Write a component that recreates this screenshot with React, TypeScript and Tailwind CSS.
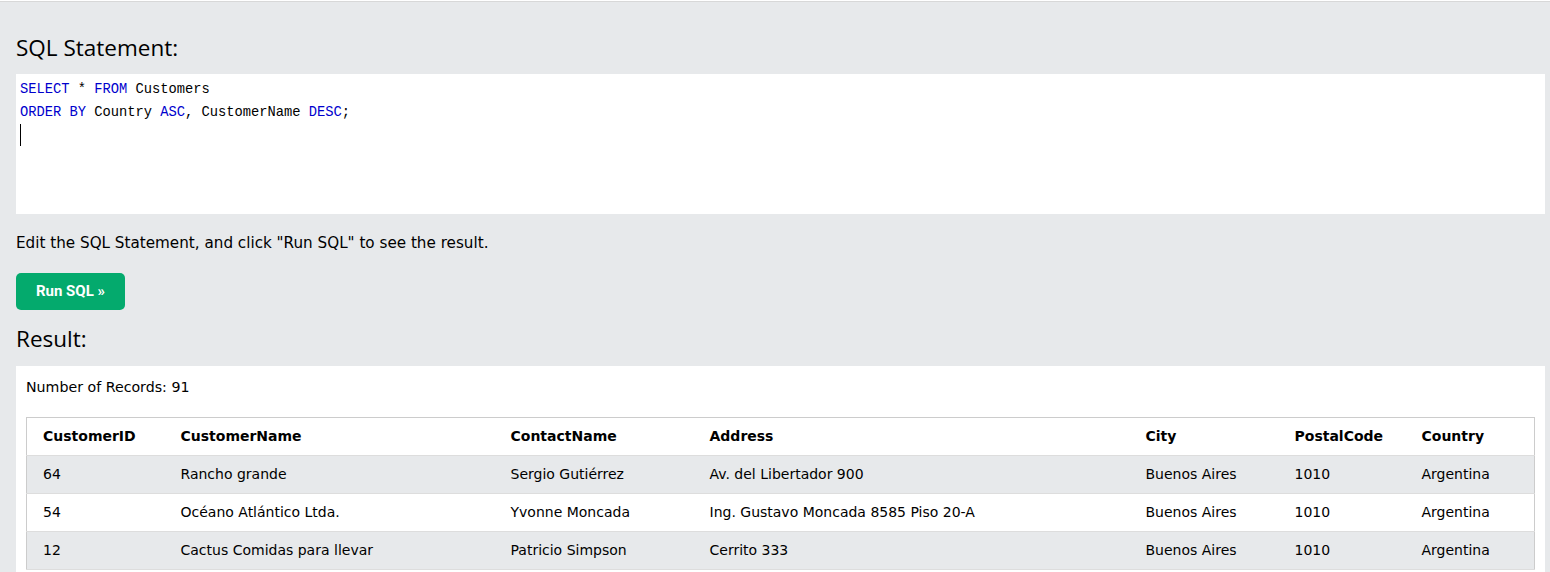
import React from 'react';

interface Customer {
  id: number;
  name: string;
  contact: string;
  address: string;
  city: string;
  postal: string;
  country: string;
}

const rows: Customer[] = [
  { id: 64, name: 'Rancho grande', contact: 'Sergio Gutiérrez', address: 'Av. del Libertador 900', city: 'Buenos Aires', postal: '1010', country: 'Argentina' },
  { id: 54, name: 'Océano Atlántico Ltda.', contact: 'Yvonne Moncada', address: 'Ing. Gustavo Moncada 8585 Piso 20-A', city: 'Buenos Aires', postal: '1010', country: 'Argentina' },
  { id: 12, name: 'Cactus Comidas para llevar', contact: 'Patricio Simpson', address: 'Cerrito 333', city: 'Buenos Aires', postal: '1010', country: 'Argentina' },
];

const headers = ['CustomerID', 'CustomerName', 'ContactName', 'Address', 'City', 'PostalCode', 'Country'];
const widths = ['w-[138px]', 'w-[330px]', 'w-[199px]', 'w-[436px]', 'w-[149px]', 'w-[127px]', ''];

const App: React.FC = () => {
  return (
    <div className="min-h-screen bg-white pt-px">
      <div className="min-h-[571px] border-t border-[#d8d8d8] bg-[#e7e9eb] pl-4 pr-[5px] text-black">
        {/* SQL editor */}
        <h2 className="pt-[31px] text-[22.5px] leading-[30px] font-['Open_Sans',sans-serif]">SQL Statement:</h2>
        <div className="mt-[11px] h-[140px] bg-white px-1 pt-[4px] font-['Liberation_Mono',monospace] text-[13.75px] leading-[23px] text-black">
          <div>
            <span className="text-[#0000cd]">SELECT</span> * <span className="text-[#0000cd]">FROM</span> Customers
          </div>
          <div>
            <span className="text-[#0000cd]">ORDER BY</span> Country <span className="text-[#0000cd]">ASC</span>, CustomerName{' '}
            <span className="text-[#0000cd]">DESC</span>;
          </div>
          <div className="h-[23px]">
            <span className="inline-block h-[22px] w-px bg-black align-middle" />
          </div>
        </div>

        <p className="mt-[18px] font-['DejaVu_Sans',sans-serif] text-[15.2px] leading-[22px]">
          Edit the SQL Statement, and click "Run SQL" to see the result.
        </p>

        <button className="mt-[19px] h-[37px] w-[109px] rounded-[5px] bg-[#04aa6d] font-['Roboto',sans-serif] text-[15px] font-bold text-white">
          Run SQL »
        </button>

        <h2 className="mt-[14px] text-[22.5px] leading-[30px] font-['Open_Sans',sans-serif]">Result:</h2>

        {/* Result */}
        <div className="mt-[12px] min-h-[206px] bg-white px-[10px] pt-[11px] pb-4 font-['DejaVu_Sans',sans-serif]">
          <div className="text-[14.2px] leading-5">Number of Records: 91</div>
          <table className="mt-[20px] w-full table-fixed border-collapse border border-[#cccccc] text-[14px]">
            <thead>
              <tr className="h-[38px] border-b border-[#dddddd]">
                {headers.map((h, i) => (
                  <th key={h} className={`${widths[i]} pl-4 text-left font-bold`}>
                    {h}
                  </th>
                ))}
              </tr>
            </thead>
            <tbody>
              {rows.map((r, i) => (
                <tr key={r.id} className={`h-[38px] border-b border-[#dddddd] ${i % 2 === 0 ? 'bg-[#e7e9eb]' : 'bg-white'}`}>
                  <td className="pl-4">{r.id}</td>
                  <td className="pl-4">{r.name}</td>
                  <td className="pl-4">{r.contact}</td>
                  <td className="pl-4">{r.address}</td>
                  <td className="pl-4">{r.city}</td>
                  <td className="pl-4">{r.postal}</td>
                  <td className="pl-4">{r.country}</td>
                </tr>
              ))}
            </tbody>
          </table>
        </div>
      </div>
    </div>
  );
};

export default App;
